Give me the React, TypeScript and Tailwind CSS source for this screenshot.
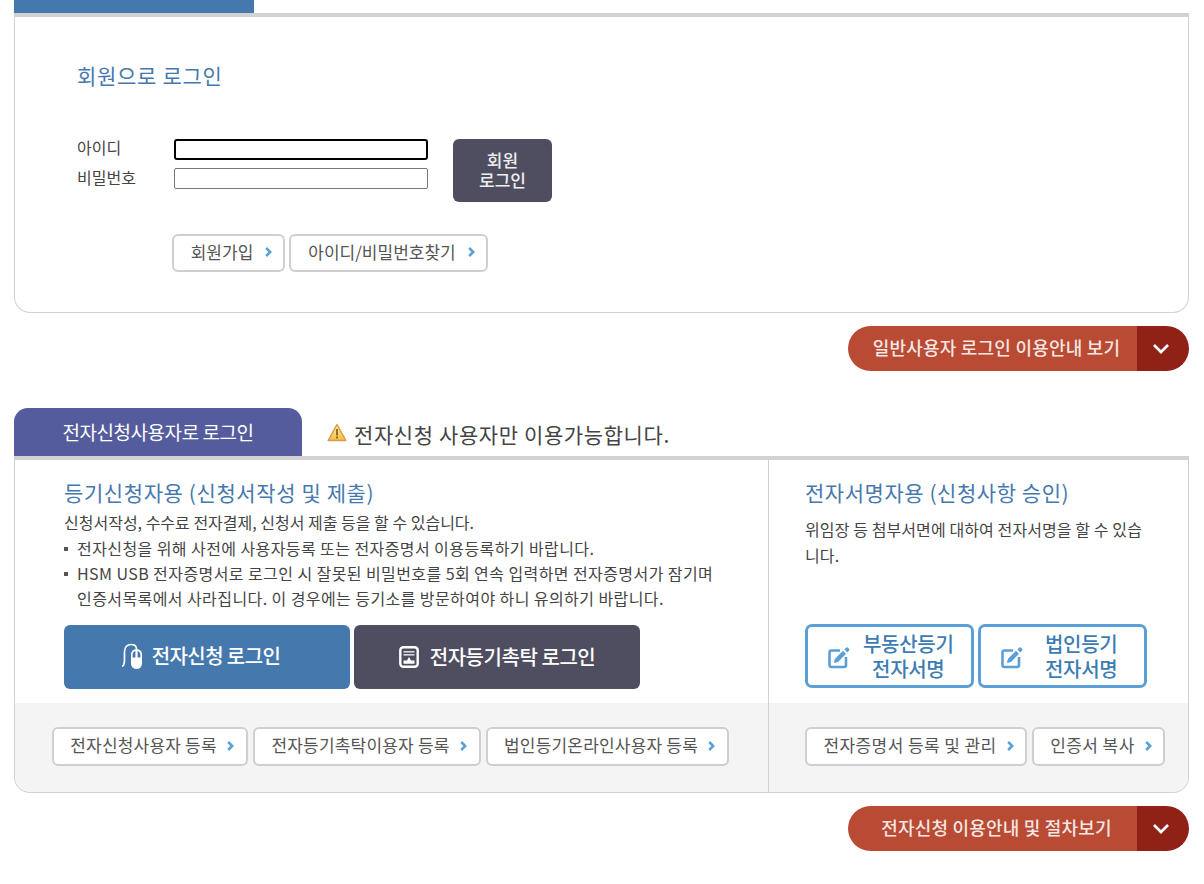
import React from "react";

const font = { fontFamily: '"Noto Sans CJK KR", "Noto Sans", sans-serif' };

function Chevron() {
  return (
    <svg width="7" height="10" viewBox="0 0 7 10" className="shrink-0 mt-[1px]">
      <path d="M1.2 1 L5.2 5 L1.2 9" fill="none" stroke="#5a9fd6" strokeWidth="2.5" />
    </svg>
  );
}

function LinkBtn({ label, w, track = "", spacing = "gap-[10px] pl-[4px]", h = "h-[39px]" }: { label: string; w: string; track?: string; spacing?: string; h?: string }) {
  return (
    <div className={`${w} ${spacing} ${h} shrink-0 flex items-center justify-center bg-white border-2 border-[#cfcfcf] rounded-[6px] text-[17px] text-[#555] whitespace-nowrap pb-[3px]`}>
      <span className={track}>{label}</span>
      <Chevron />
    </div>
  );
}

function RedBtn({ label }: { label: string }) {
  return (
    <div className="flex justify-end">
      <div className="w-[341px] h-[45px] flex rounded-full overflow-hidden">
        <div className="w-[289px] bg-[#b94a34] text-[#f5e6e2] text-[18px] tracking-[0.2px] font-medium flex items-center justify-center whitespace-nowrap pl-[8px] pb-[2px]">{label}</div>
        <div className="flex-1 bg-[#902116] flex items-center justify-center pr-[4px]">
          <svg width="18" height="11" viewBox="0 0 18 11">
            <path d="M2 2 L9 9 L16 2" fill="none" stroke="#fff" strokeWidth="2.7" />
          </svg>
        </div>
      </div>
    </div>
  );
}

function EditIcon() {
  return (
    <svg width="22" height="24" viewBox="0 0 22 24" className="shrink-0 mt-[2px]">
      <path d="M12 5.5 H3.5 A2 2 0 0 0 1.5 7.5 V20 A2 2 0 0 0 3.5 22 H16 A2 2 0 0 0 18 20 V12" fill="none" stroke="#5a9fd6" strokeWidth="2.6" />
      <path d="M6 18 L6.8 14 L15 5.8 L18 8.8 L10 17 Z" fill="#5a9fd6" />
      <path d="M16.4 4.4 L18 2.8 A1.5 1.5 0 0 1 20 2.8 L21 3.8 A1.5 1.5 0 0 1 21 5.8 L19.4 7.4 Z" fill="#5a9fd6" />
    </svg>
  );
}

function SignBtn({ top, bottom, textClass }: { top: string; bottom: string; textClass: string }) {
  return (
    <div className="w-[169px] h-[64px] border-[3px] border-[#5a9fd6] rounded-[7px] bg-white flex items-center pl-[20px] shrink-0">
      <EditIcon />
      <div className={`${textClass} text-center text-[20px] leading-[25px] font-medium text-[#3c7cb4] whitespace-nowrap tracking-[-0.3px]`}>
        <div>{top}</div>
        <div>{bottom}</div>
      </div>
    </div>
  );
}

export default function App() {
  return (
    <div className="w-[1204px] h-[884px] bg-white overflow-hidden pl-[14px] pr-[15px]" style={font}>
      {/* member login */}
      <div className="w-[240px] h-[13px] bg-[#4579ae]" />
      <div className="h-[300px] border-t-[4px] border-t-[#d2d2d2] border-x border-b border-x-[#d2d2d2] border-b-[#d2d2d2] rounded-b-[16px] pl-[62px] pt-[43px]">
        <h2 className="text-[21px] leading-[30px] font-normal text-[#4579ae] tracking-[0.7px]">회원으로 로그인</h2>
        <div className="flex mt-[49px] h-[63px]">
          <div className="w-[97px] text-[16px] text-[#444]">
            <div className="h-[30px] leading-[18px] -mt-[1px]">아이디</div>
            <div className="leading-[18px]">비밀번호</div>
          </div>
          <div className="w-[254px] flex flex-col gap-[8px]">
            <div className="h-[21px] border-[2px] border-black rounded-[3px] bg-white" />
            <div className="h-[21px] border border-[#767676] rounded-[2px] bg-white" />
          </div>
          <div className="ml-[25px] w-[99px] h-[63px] rounded-[6px] bg-[#4f4e61] text-[#eee] text-[17px] font-medium leading-[20px] flex flex-col items-center justify-center pb-[1px]">
            <div>회원</div>
            <div>로그인</div>
          </div>
        </div>
        <div className="flex gap-[4px] mt-[32px] ml-[95px]">
          <LinkBtn label="회원가입" w="w-[113px]" spacing="gap-[12px] pl-[6px]" h="h-[38px]" />
          <LinkBtn label="아이디/비밀번호찾기" w="w-[199px]" spacing="gap-[12px] pl-[6px]" h="h-[38px]" />
        </div>
      </div>

      <div className="mt-[13px]"><RedBtn label="일반사용자 로그인 이용안내 보기" /></div>

      {/* e-application login */}
      <div className="flex h-[48px] mt-[37px]">
        <div className="w-[288px] bg-[#545c9d] rounded-t-[14px] text-white text-[19px] flex items-center justify-center tracking-[-0.45px]">전자신청사용자로 로그인</div>
        <div className="flex items-center pl-[25px] pt-[5px] gap-[7px] text-[21px] tracking-[0.6px] text-[#444] whitespace-nowrap">
          <svg width="20" height="19" viewBox="0 0 20 19" className="-mt-[5px]">
            <defs>
              <linearGradient id="warn" x1="0" y1="0" x2="0" y2="1">
                <stop offset="0" stopColor="#fdf0a8" />
                <stop offset="1" stopColor="#f5bd45" />
              </linearGradient>
            </defs>
            <path d="M10 1.5 L18.8 17.5 H1.2 Z" fill="url(#warn)" stroke="#d99a4a" strokeWidth="1.5" strokeLinejoin="round" />
            <rect x="9.1" y="6" width="1.8" height="6.5" fill="#8a6020" />
            <rect x="9.1" y="13.5" width="1.8" height="2" fill="#8a6020" />
          </svg>
          <span>전자신청 사용자만 이용가능합니다.</span>
        </div>
      </div>
      <div className="h-[337px] border-t-[4px] border-t-[#d2d2d2] border-x border-b border-x-[#d2d2d2] border-b-[#d2d2d2] rounded-b-[16px] flex overflow-hidden">
        {/* left */}
        <div className="w-[754px] flex flex-col border-r border-r-[#d2d2d2]">
          <div className="h-[243px] pl-[49px] pt-[17px]">
            <h3 className="text-[21px] leading-[30px] font-normal text-[#4579ae] tracking-[0.6px]">등기신청자용 (신청서작성 및 제출)</h3>
            <p className="text-[16px] leading-[25px] text-[#444] mt-[3px]">신청서작성, 수수료 전자결제, 신청서 제출 등을 할 수 있습니다.</p>
            <ul className="text-[16px] tracking-[0.42px] leading-[25px] text-[#444] whitespace-nowrap mt-[1px]">
              <li className="flex items-center"><span className="w-[4px] h-[4px] bg-[#555] mr-[9px]" />전자신청을 위해 사전에 사용자등록 또는 전자증명서 이용등록하기 바랍니다.</li>
              <li className="flex items-center"><span className="w-[4px] h-[4px] bg-[#555] mr-[9px]" />HSM USB 전자증명서로 로그인 시 잘못된 비밀번호를 5회 연속 입력하면 전자증명서가 잠기며</li>
              <li className="pl-[13px]">인증서목록에서 사라집니다. 이 경우에는 등기소를 방문하여야 하니 유의하기 바랍니다.</li>
            </ul>
            <div className="flex gap-[4px] mt-[14px]">
              <div className="w-[286px] h-[64px] rounded-[6px] bg-[#4579ae] text-white text-[20px] font-medium flex items-center justify-center gap-[8px] pb-[3px] pr-[14px] tracking-[-0.6px]">
                <svg width="24" height="28" viewBox="0 0 24 28">
                  <path d="M2 24 C5 24 4.5 17 4.5 10 C4.5 5 7.5 2.5 11 2.5 C14.5 2.5 16.5 4.5 16.5 7" fill="none" stroke="#fff" strokeWidth="1.7" />
                  <rect x="11" y="7" width="11" height="20" rx="5.5" fill="#fff" />
                  <path d="M12.6 15.5 V13 C12.6 10.8 13.6 9.4 15.4 8.9 V15.5 Z M17.6 15.5 V8.9 C19.4 9.4 20.4 10.8 20.4 13 V15.5 Z" fill="#4579ae" />
                </svg>
                <span>전자신청 로그인</span>
              </div>
              <div className="w-[286px] h-[64px] rounded-[6px] bg-[#4f4e61] text-white text-[20px] font-medium flex items-center justify-center gap-[11px] pb-[1px] tracking-[-0.45px]">
                <svg width="20" height="22" viewBox="0 0 20 22">
                  <rect x="1.3" y="1.3" width="17.4" height="19.4" rx="3" fill="none" stroke="#fff" strokeWidth="2.4" />
                  <rect x="4.5" y="5" width="11" height="1.6" fill="#d8d8de" />
                  <rect x="4.5" y="8" width="11" height="1.6" fill="#d8d8de" />
                  <path d="M10 11 L12 14.5 H15.5 V17.8 H4.5 V14.5 H8 Z" fill="#fff" />
                </svg>
                <span>전자등기촉탁 로그인</span>
              </div>
            </div>
          </div>
          <div className="flex-1 bg-[#f4f4f4] pl-[37px] pt-[24px] flex gap-[5px]">
            <LinkBtn label="전자신청사용자 등록" w="w-[196px]" track="tracking-[0.2px]" />
            <LinkBtn label="전자등기촉탁이용자 등록" w="w-[228px]" track="tracking-[0.2px]" />
            <LinkBtn label="법인등기온라인사용자 등록" w="w-[243px]" track="tracking-[0.2px]" />
          </div>
        </div>
        {/* right */}
        <div className="flex-1 flex flex-col">
          <div className="h-[243px] pl-[36px] pt-[17px] pr-[40px]">
            <h3 className="text-[21px] leading-[30px] font-normal text-[#4579ae] whitespace-nowrap tracking-[0.55px]">전자서명자용 (신청사항 승인)</h3>
            <p className="text-[16px] leading-[26px] tracking-[0.1px] text-[#444] mt-[9px]">위임장 등 첨부서면에 대하여 전자서명을 할 수 있습니다.</p>
            <div className="flex gap-[4px] mt-[56px]">
              <SignBtn top="부동산등기" bottom="전자서명" textClass="ml-[13px]" />
              <SignBtn top="법인등기" bottom="전자서명" textClass="ml-[22px]" />
            </div>
          </div>
          <div className="flex-1 bg-[#f4f4f4] pl-[36px] pt-[24px] flex gap-[5px]">
            <LinkBtn label="전자증명서 등록 및 관리" w="w-[222px]" track="tracking-[0.4px]" spacing="gap-[10px] pl-[5px]" />
            <LinkBtn label="인증서 복사" w="w-[133px]" track="tracking-[0.4px]" spacing="gap-[10px] pl-[5px]" />
          </div>
        </div>
      </div>

      <div className="mt-[13px]"><RedBtn label="전자신청 이용안내 및 절차보기" /></div>
    </div>
  );
}
